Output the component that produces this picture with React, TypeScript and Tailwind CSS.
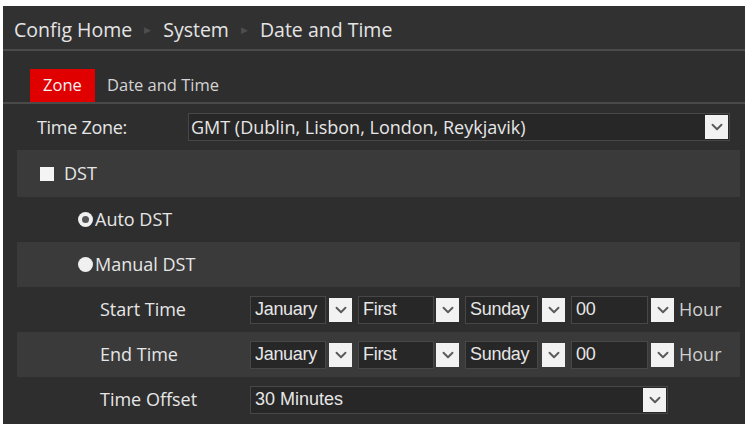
import { ChevronDown } from 'lucide-react';

const font = { fontFamily: '"Open Sans", "Noto Sans", sans-serif' };
const arial = { fontFamily: '"Liberation Sans", Arial, sans-serif' };

function ArrowBox({ className = '' }: { className?: string }) {
  return (
    <span className={`flex h-[24px] w-[23px] shrink-0 items-center justify-center bg-[#f2f2f2] ${className}`}>
      <ChevronDown className="h-[18px] w-[18px] text-[#5a5a5a]" strokeWidth={2.5} />
    </span>
  );
}

function Select({ value, width }: { value: string; width: string }) {
  return (
    <div
      className={`flex h-[28px] items-center border border-[#474747] bg-[#272727] pl-[4px] text-[18px] tracking-[-0.3px] text-[#e6e6e6] ${width}`}
      style={arial}
    >
      {value}
    </div>
  );
}

function TimeRow({ label, light }: { label: string; light?: boolean }) {
  return (
    <div className={`flex h-[45px] items-center ${light ? 'bg-[#3a3a3a]' : ''}`}>
      <div className="w-[233px] pl-[83px] text-[18px] text-[#e6e6e6]">{label}</div>
      <div className="flex items-center">
        <Select value="January" width="w-[76px]" />
        <ArrowBox className="ml-[3px]" />
        <Select value="First" width="w-[76px] ml-[6px]" />
        <ArrowBox className="ml-[2px]" />
        <Select value="Sunday" width="w-[73px] ml-[6px]" />
        <ArrowBox className="ml-[4px]" />
        <Select value="00" width="w-[77px] ml-[6px]" />
        <ArrowBox className="ml-[3px]" />
        <span className="ml-[5px] text-[18px] text-[#cfcfcf]">Hour</span>
      </div>
    </div>
  );
}

export default function App() {
  return (
    <div className="h-[429px] w-[751px] bg-white pl-[3px] pr-[6px] pt-[6px] pb-[5px]" style={font}>
      <div className="flex h-full flex-col bg-[#2e2e2e]">
        {/* breadcrumb */}
        <div className="flex h-[45px] items-center gap-[12px] border-b-2 border-[#4a4a4a] bg-[#313131] pl-[11px] pt-[4px] text-[19.5px] text-[#e4e4e4]">
          <span>Config Home</span>
          <span className="text-[9px] text-[#4e4e4e]">▶</span>
          <span>System</span>
          <span className="text-[9px] text-[#4e4e4e]">▶</span>
          <span>Date and Time</span>
        </div>

        {/* tabs */}
        <div className="flex h-[53px] items-end border-b-2 border-[#4a4a4a] pl-[27px]">
          <div className="flex h-[33px] w-[65px] items-center justify-center bg-[#e00000] text-[16.5px] text-[#f3f3f3]">Zone</div>
          <div className="flex h-[33px] items-center pl-[12px] text-[16.5px] text-[#d4d4d4]">Date and Time</div>
        </div>

        <div className="flex flex-1 flex-col pl-[14px] pr-[5px]">
          {/* time zone */}
          <div className="flex h-[46px] items-center">
            <div className="w-[171px] pl-[20px] text-[18px] tracking-[-0.3px] text-[#e6e6e6]">Time Zone:</div>
            <div className="flex h-[28px] w-[542px] items-center justify-between border border-[#474747] bg-[#272727] pl-[2px] pr-[1px] text-[18px] text-[#e6e6e6]">
              <span>GMT (Dublin, Lisbon, London, Reykjavik)</span>
              <ArrowBox />
            </div>
          </div>

          {/* DST */}
          <div className="flex h-[47px] items-center bg-[#3a3a3a] pl-[23px] text-[18px] text-[#e6e6e6]">
            <span className="mr-[10px] h-[14px] w-[14px] bg-[#f4f4f4]" />
            DST
          </div>

          <div className="flex h-[45px] items-center pl-[61px] text-[18px] text-[#e6e6e6]">
            <span className="mr-[2px] flex h-[15px] w-[15px] items-center justify-center rounded-full bg-[#f0f0f0]">
              <span className="h-[7px] w-[7px] rounded-full bg-[#555]" />
            </span>
            Auto DST
          </div>

          <div className="flex h-[45px] items-center bg-[#3a3a3a] pl-[61px] text-[18px] text-[#e6e6e6]">
            <span className="mr-[2px] h-[15px] w-[15px] rounded-full bg-[#f0f0f0]" />
            Manual DST
          </div>

          <TimeRow label="Start Time" />
          <TimeRow label="End Time" light />

          <div className="flex h-[45px] items-center">
            <div className="w-[233px] pl-[83px] text-[18px] text-[#e6e6e6]">Time Offset</div>
            <div
              className="flex h-[28px] w-[418px] items-center justify-between border border-[#474747] bg-[#272727] pl-[4px] pr-[1px] text-[18px] text-[#e6e6e6]"
              style={arial}
            >
              <span>30 Minutes</span>
              <ArrowBox />
            </div>
          </div>
        </div>
      </div>
    </div>
  );
}
